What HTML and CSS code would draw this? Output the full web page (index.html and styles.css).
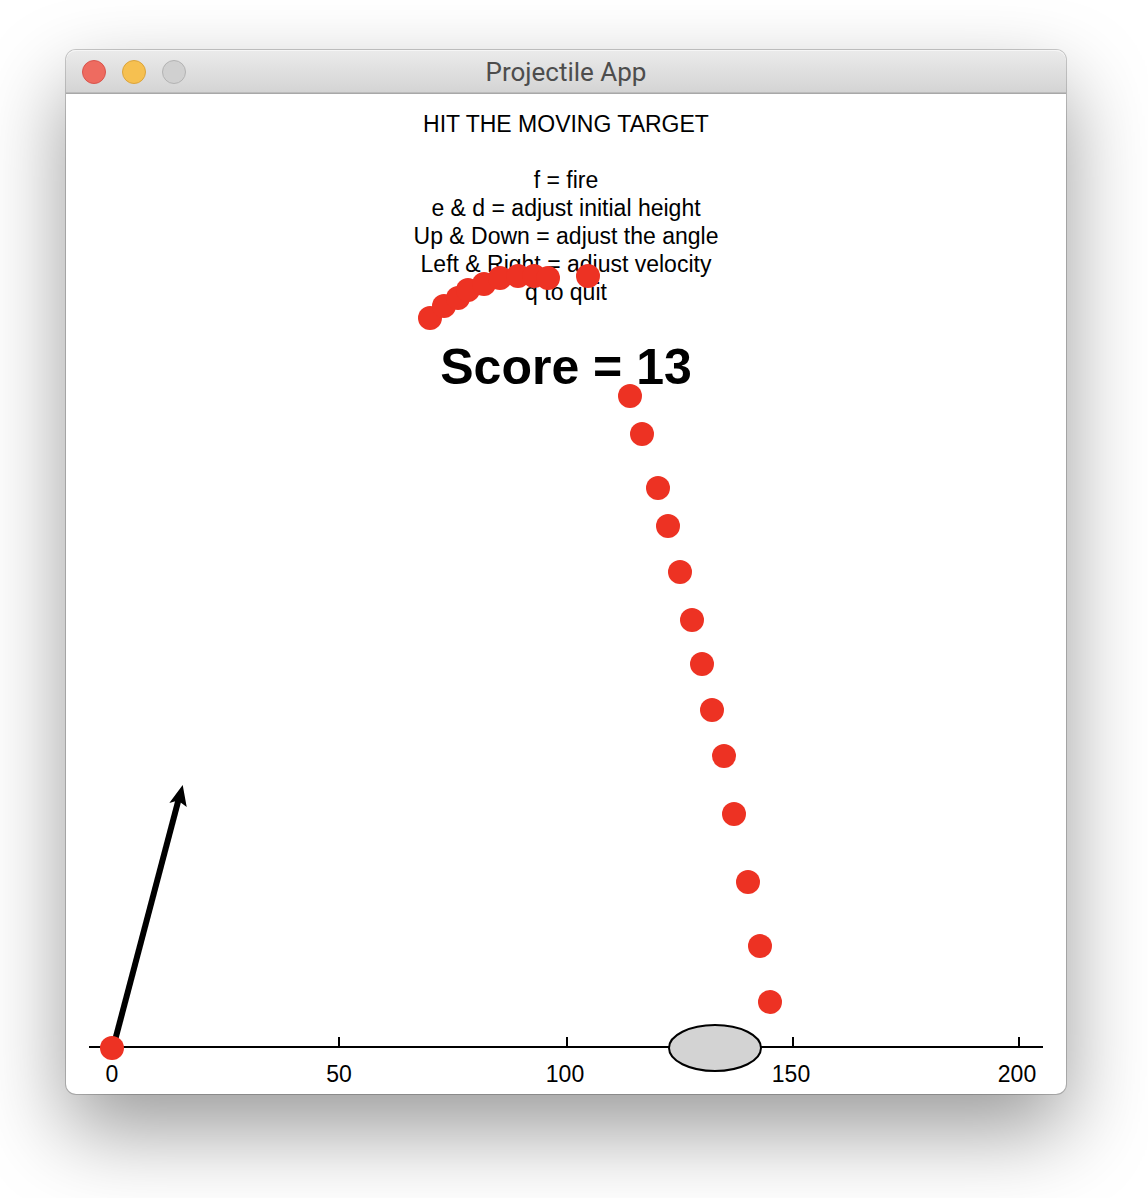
FILE: index.html
```html
<!DOCTYPE html>
<html lang="en">
<head>
<meta charset="utf-8">
<meta name="viewport" content="width=device-width, initial-scale=1">
<title>Projectile App</title>
<link rel="stylesheet" href="styles.css">
</head>
<body>
<main class="window">
  <header class="titlebar">
    <div class="controls">
      <button class="control control-close" type="button" aria-label="Close"></button>
      <button class="control control-minimize" type="button" aria-label="Minimize"></button>
      <button class="control control-zoom" type="button" aria-label="Zoom" disabled></button>
    </div>
    <h1 class="title">Projectile App</h1>
  </header>
  <section class="stage">
    <div class="info">
      <p class="headline">HIT THE MOVING TARGET</p>
      <p>f = fire</p>
      <p>e &amp; d = adjust initial height</p>
      <p>Up &amp; Down = adjust the angle</p>
      <p>Left &amp; Right = adjust velocity</p>
      <p>q to quit</p>
      <h2 class="score">Score = 13</h2>
    </div>
    <svg class="field" viewBox="0 0 1000 1000" role="img" aria-label="Projectile path and target">
      <!-- ground axis -->
      <path class="axis" d="M23 953H977M273 943V953M501 943V953M727 943V953M953 943V953"/>
      <g class="labels">
        <text x="46" y="988">0</text>
        <text x="273" y="988">50</text>
        <text x="499" y="988">100</text>
        <text x="725" y="988">150</text>
        <text x="951" y="988">200</text>
      </g>
      <!-- launch direction -->
      <path class="aim" d="M47 954L113 704"/>
      <path d="M116.700 691L103.300 709L112 706.500L120.700 713Z"/>
      <ellipse class="target" cx="649" cy="954" rx="46" ry="23"/>
      <g class="balls">
        <circle cx="46" cy="954" r="12"/>
        <circle cx="364" cy="224" r="12"/>
        <circle cx="378" cy="212" r="12"/>
        <circle cx="392" cy="204" r="12"/>
        <circle cx="402" cy="196" r="12"/>
        <circle cx="418" cy="190" r="12"/>
        <circle cx="434" cy="184" r="12"/>
        <circle cx="452" cy="182" r="12"/>
        <circle cx="468" cy="182" r="12"/>
        <circle cx="482" cy="184" r="12"/>
        <circle cx="522" cy="182" r="12"/>
        <circle cx="564" cy="302" r="12"/>
        <circle cx="576" cy="340" r="12"/>
        <circle cx="592" cy="394" r="12"/>
        <circle cx="602" cy="432" r="12"/>
        <circle cx="614" cy="478" r="12"/>
        <circle cx="626" cy="526" r="12"/>
        <circle cx="636" cy="570" r="12"/>
        <circle cx="646" cy="616" r="12"/>
        <circle cx="658" cy="662" r="12"/>
        <circle cx="668" cy="720" r="12"/>
        <circle cx="682" cy="788" r="12"/>
        <circle cx="694" cy="852" r="12"/>
        <circle cx="704" cy="908" r="12"/>
      </g>
    </svg>
  </section>
</main>
</body>
</html>
```
FILE: styles.css
```css
* {
  box-sizing: border-box;
}

body {
  margin: 0;
  padding: 50px 82px 104px 66px;
  background: #fff;
  color: #000;
  font-family: "Liberation Sans", Arial, sans-serif;
  font-size: 23px;
  line-height: 28px;
  overflow-x: hidden;
}

.window {
  border-radius: 10px;
  background: #fff;
  box-shadow: 0 0 0 1px rgba(0, 0, 0, 0.2), 0 36px 84px rgba(0, 0, 0, 0.4);
}

.titlebar {
  display: grid;
  grid-template-columns: 1fr auto 1fr;
  align-items: center;
  height: 44px;
  padding: 0 16px;
  border-radius: 10px 10px 0 0;
  background: linear-gradient(#ebebeb, #d3d3d3);
  box-shadow: inset 0 -1px 0 #a8a8a8, inset 0 -2px 0 #bcbcbc, inset 0 1px 0 #f6f6f6;
}

.controls {
  display: flex;
  gap: 16px;
}

.control {
  width: 24px;
  height: 24px;
  padding: 0;
  border: 1px solid;
  border-radius: 50%;
}

.control-close {
  border-color: #d9544c;
  background: #ee6b60;
}

.control-minimize {
  border-color: #dba43c;
  background: #f6c050;
}

.control-zoom {
  border-color: #b3b3b3;
  background: #d0d0d0;
}

.title {
  margin: 0;
  color: #4d4d4d;
  font-family: Roboto, sans-serif;
  font-size: 26px;
  font-weight: 400;
}

/* The text and the playing field share one grid cell. */
.stage {
  display: grid;
}

.info,
.field {
  grid-area: 1 / 1;
}

.info {
  padding-top: 16px;
  text-align: center;
}

.info p {
  margin: 0;
}

.info .headline {
  margin-bottom: 28px;
}

.score {
  margin: 32px 0 0;
  font-size: 50px;
  line-height: 58px;
}

.field {
  display: block;
  width: 100%;
}

.axis {
  fill: none;
  stroke: #000;
  stroke-width: 2px;
}

.labels {
  text-anchor: middle;
}

.aim {
  stroke: #000;
  stroke-width: 6px;
}

.target {
  fill: #d3d3d3;
  stroke: #000;
  stroke-width: 2px;
}

.balls {
  fill: #ed3223;
}
```
